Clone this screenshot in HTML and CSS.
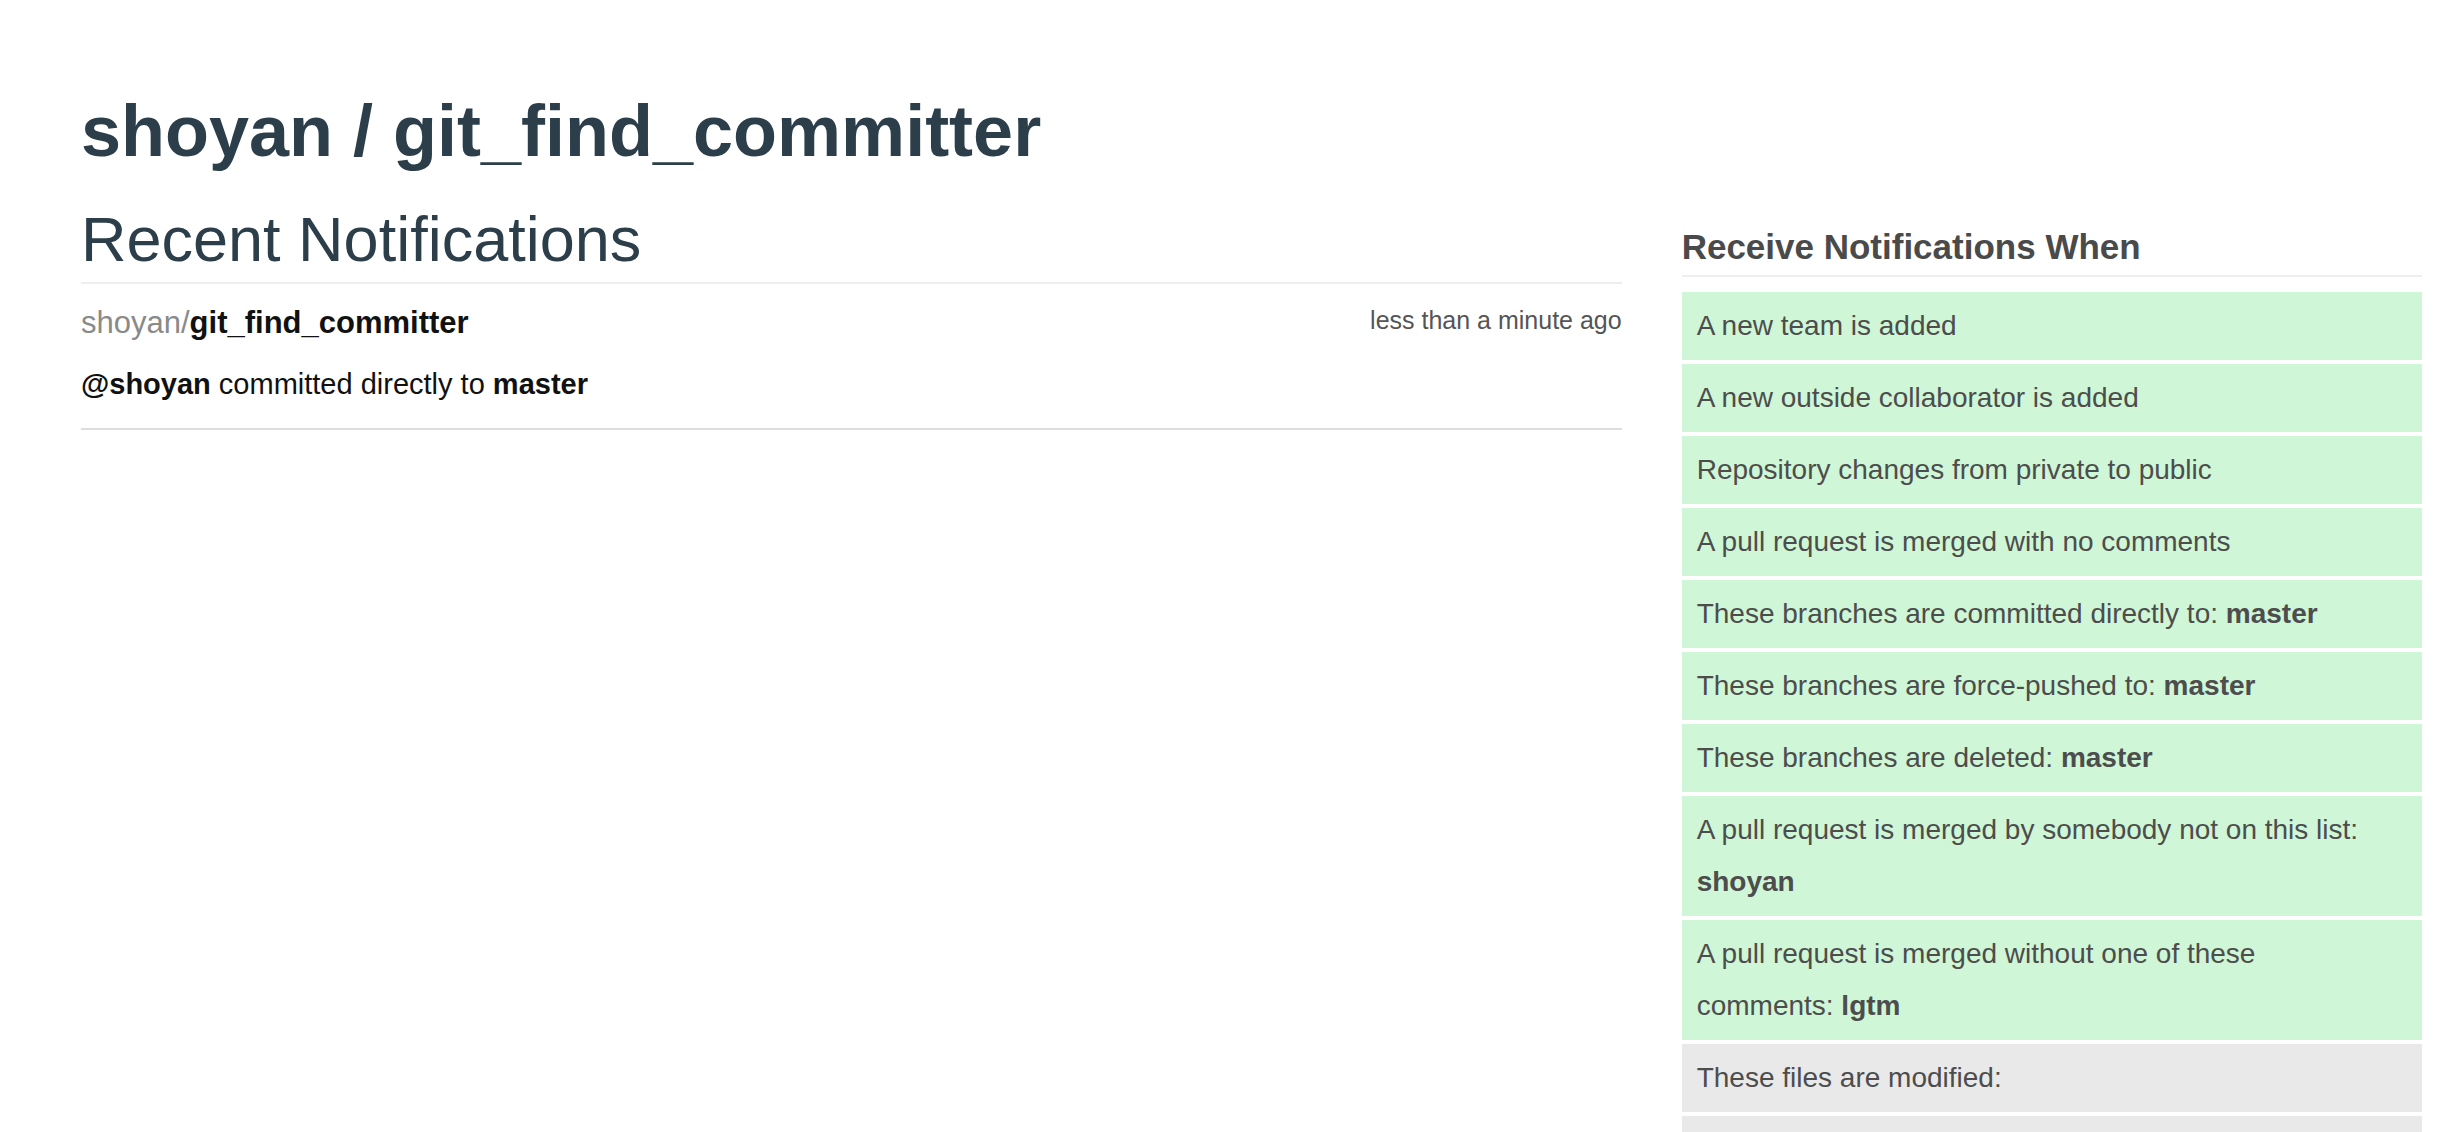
FILE: index.html
```html
<!DOCTYPE html>
<html lang="en">
<head>
<meta charset="utf-8">
<title>shoyan / git_find_committer</title>
<link rel="stylesheet" href="styles.css">
</head>
<body>
<div class="page">
  <header class="header">
    <h1 class="repo-title">shoyan / git_find_committer</h1>
  </header>
  <div class="row">
    <main class="col col-main">
      <h2 class="section-title">Recent Notifications</h2>
      <ul class="notifications">
        <li class="notification">
          <div class="notification-head">
            <span class="repo"><span class="repo-owner">shoyan/</span><span class="repo-name">git_find_committer</span></span>
            <span class="time">less than a minute ago</span>
          </div>
          <p class="message"><strong>@shoyan</strong> committed directly to <strong>master</strong></p>
        </li>
      </ul>
    </main>
    <aside class="col col-side">
      <h4 class="side-title">Receive Notifications When</h4>
      <ul class="rules">
        <li class="rule on">A new team is added</li>
        <li class="rule on">A new outside collaborator is added</li>
        <li class="rule on">Repository changes from private to public</li>
        <li class="rule on">A pull request is merged with no comments</li>
        <li class="rule on">These branches are committed directly to: <strong>master</strong></li>
        <li class="rule on">These branches are force-pushed to: <strong>master</strong></li>
        <li class="rule on">These branches are deleted: <strong>master</strong></li>
        <li class="rule on">A pull request is merged by somebody not on this list: <strong>shoyan</strong></li>
        <li class="rule on">A pull request is merged without one of these comments:&nbsp;<strong>lgtm</strong></li>
        <li class="rule off">These files are modified:</li>
        <li class="rule off">These files are deleted:</li>
      </ul>
    </aside>
  </div>
</div>
</body>
</html>
```

FILE: styles.css
```css
html, body {
  margin: 0;
  padding: 0;
  background: #ffffff;
}

body {
  font-family: "Liberation Sans", Arial, Helvetica, sans-serif;
  color: #111111;
}

.page {
  padding-left: 51px;
}

.header {
  padding: 0 30px;
}

.repo-title {
  margin: 91px 0 0 0;
  font-size: 72px;
  line-height: 80px;
  font-weight: bold;
  color: #2b3e49;
}

.row {
  display: grid;
  grid-template-columns: 2fr 1fr;
}

.col {
  padding: 0 30px;
  min-width: 0;
}

.section-title {
  margin: 34px 0 0 0;
  padding-bottom: 9px;
  font-size: 63px;
  line-height: 68px;
  font-weight: normal;
  color: #2b3e49;
  border-bottom: 2px solid #eeeeee;
}

.notifications {
  list-style: none;
  margin: 0;
  padding: 0;
}

.notification {
  padding-top: 19px;
  padding-bottom: 26px;
  border-bottom: 2px solid #dddddd;
}

.notification-head {
  display: flex;
  justify-content: space-between;
  align-items: flex-start;
}

.repo {
  font-size: 31px;
  line-height: 40px;
}

.repo-owner {
  color: #8a8a8a;
}

.repo-name {
  color: #111111;
  font-weight: bold;
}

.time {
  font-size: 25px;
  line-height: 34px;
  color: #555555;
}

.message {
  margin: 23px 0 0 0;
  font-size: 29px;
  line-height: 36px;
  color: #111111;
}

.side-title {
  margin: 56px 0 0 0;
  padding-bottom: 8px;
  font-size: 35px;
  line-height: 40px;
  font-weight: bold;
  color: #4a4a4a;
  border-bottom: 2px solid #eeeeee;
}

.rules {
  list-style: none;
  margin: 15px 0 0 0;
  padding: 0;
}

.rule {
  margin-bottom: 4px;
  padding: 8px 15px;
  font-size: 28px;
  line-height: 52px;
  color: #4d4d4d;
}

.rule strong {
  font-weight: bold;
}

.rule.on {
  background: #cff6d6;
}

.rule.off {
  background: #e9e9e9;
}
```
